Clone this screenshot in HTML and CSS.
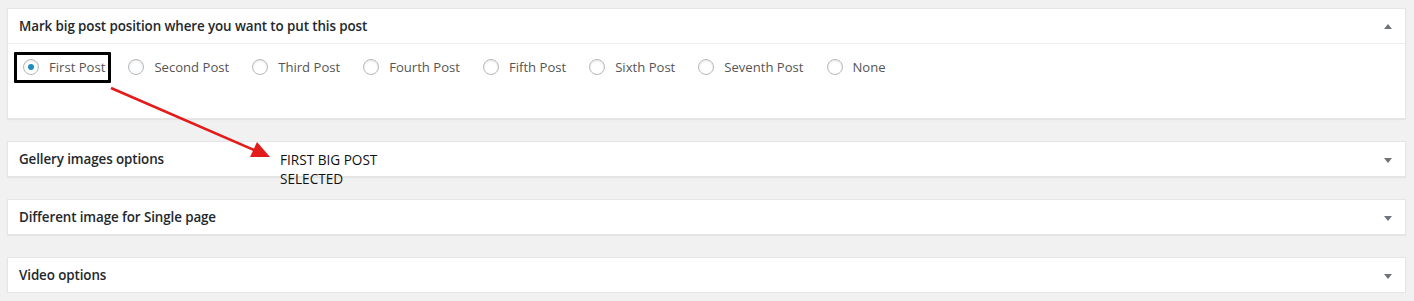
FILE: index.html
```html
<!DOCTYPE html>
<html>
<head>
<meta charset="utf-8">
<link rel="stylesheet" href="styles.css">
</head>
<body>
<div class="page">
  <div class="panel">
    <div class="panel-head">
      <span class="title">Mark big post position where you want to put this post</span>
      <span class="toggle up"></span>
    </div>
    <div class="panel-body">
      <label class="opt"><span class="radio checked"></span>First Post</label>
      <label class="opt"><span class="radio"></span>Second Post</label>
      <label class="opt"><span class="radio"></span>Third Post</label>
      <label class="opt"><span class="radio"></span>Fourth Post</label>
      <label class="opt"><span class="radio"></span>Fifth Post</label>
      <label class="opt"><span class="radio"></span>Sixth Post</label>
      <label class="opt"><span class="radio"></span>Seventh Post</label>
      <label class="opt"><span class="radio"></span>None</label>
    </div>
  </div>
  <div class="panel closed">
    <div class="panel-head">
      <span class="title">Gellery images options</span>
      <span class="toggle down"></span>
    </div>
  </div>
  <div class="panel closed">
    <div class="panel-head">
      <span class="title">Different image for Single page</span>
      <span class="toggle down"></span>
    </div>
  </div>
  <div class="panel closed">
    <div class="panel-head">
      <span class="title">Video options</span>
      <span class="toggle down"></span>
    </div>
  </div>

  <div class="hl-box"></div>
  <svg class="arrow" width="300" height="120" viewBox="0 0 300 120">
    <line x1="2" y1="2" x2="152" y2="67" stroke="#e31b1b" stroke-width="2.6"/>
    <polygon points="161,71 141,71 148,56" fill="#e31b1b"/>
  </svg>
  <div class="note">FIRST BIG POST SELECTED</div>
</div>
</body>
</html>
```
FILE: styles.css
```css
html, body {
  margin: 0;
  padding: 0;
  background: #f1f1f1;
}
body {
  font-family: "Open Sans", "Noto Sans", sans-serif;
  color: #23282d;
}
.page {
  position: relative;
  padding: 8px 8px 0 7px;
  display: flex;
  flex-direction: column;
  gap: 22px;
}
.panel {
  width: 1399px;
  box-sizing: border-box;
  background: #fff;
  border: 1px solid #e5e5e5;
  box-shadow: 0 1px 1px rgba(0,0,0,0.05);
}
.panel-head {
  height: 34px;
  display: flex;
  align-items: center;
  justify-content: space-between;
  padding: 0 13px 0 11px;
  border-bottom: 1px solid #eeeeee;
}
.closed .panel-head {
  border-bottom: none;
}
.title {
  font-size: 13.4px;
  font-weight: 600;
  letter-spacing: -0.1px;
  color: #23282d;
}
.toggle {
  width: 0;
  height: 0;
  border-left: 4px solid transparent;
  border-right: 4px solid transparent;
}
.toggle.up {
  border-bottom: 5px solid #6f7479;
}
.toggle.down {
  border-top: 5px solid #6f7479;
  margin-top: 2px;
}
.panel-body {
  height: 74px;
  box-sizing: border-box;
  padding: 14px 0 0 15px;
  display: flex;
  align-items: flex-start;
  gap: 23px;
}
.opt {
  display: flex;
  align-items: center;
  height: 18px;
  font-size: 13.1px;
  color: #555;
}
.radio {
  width: 14px;
  height: 14px;
  border: 1px solid #b4b9be;
  border-radius: 50%;
  box-sizing: content-box;
  margin-right: 10px;
  box-shadow: inset 0 1px 2px rgba(0,0,0,0.1);
  display: flex;
  align-items: center;
  justify-content: center;
}
.radio.checked::after {
  content: "";
  width: 6px;
  height: 6px;
  border-radius: 50%;
  background: #1e8cbe;
}
.hl-box {
  position: absolute;
  left: 14px;
  top: 52px;
  width: 91px;
  height: 25px;
  border: 3px solid #000;
  border-radius: 1px;
}
.arrow {
  position: absolute;
  left: 109px;
  top: 86px;
}
.note {
  position: absolute;
  left: 280px;
  top: 150px;
  width: 115px;
  font-size: 13.6px;
  line-height: 19px;
  color: #111;
}
```
